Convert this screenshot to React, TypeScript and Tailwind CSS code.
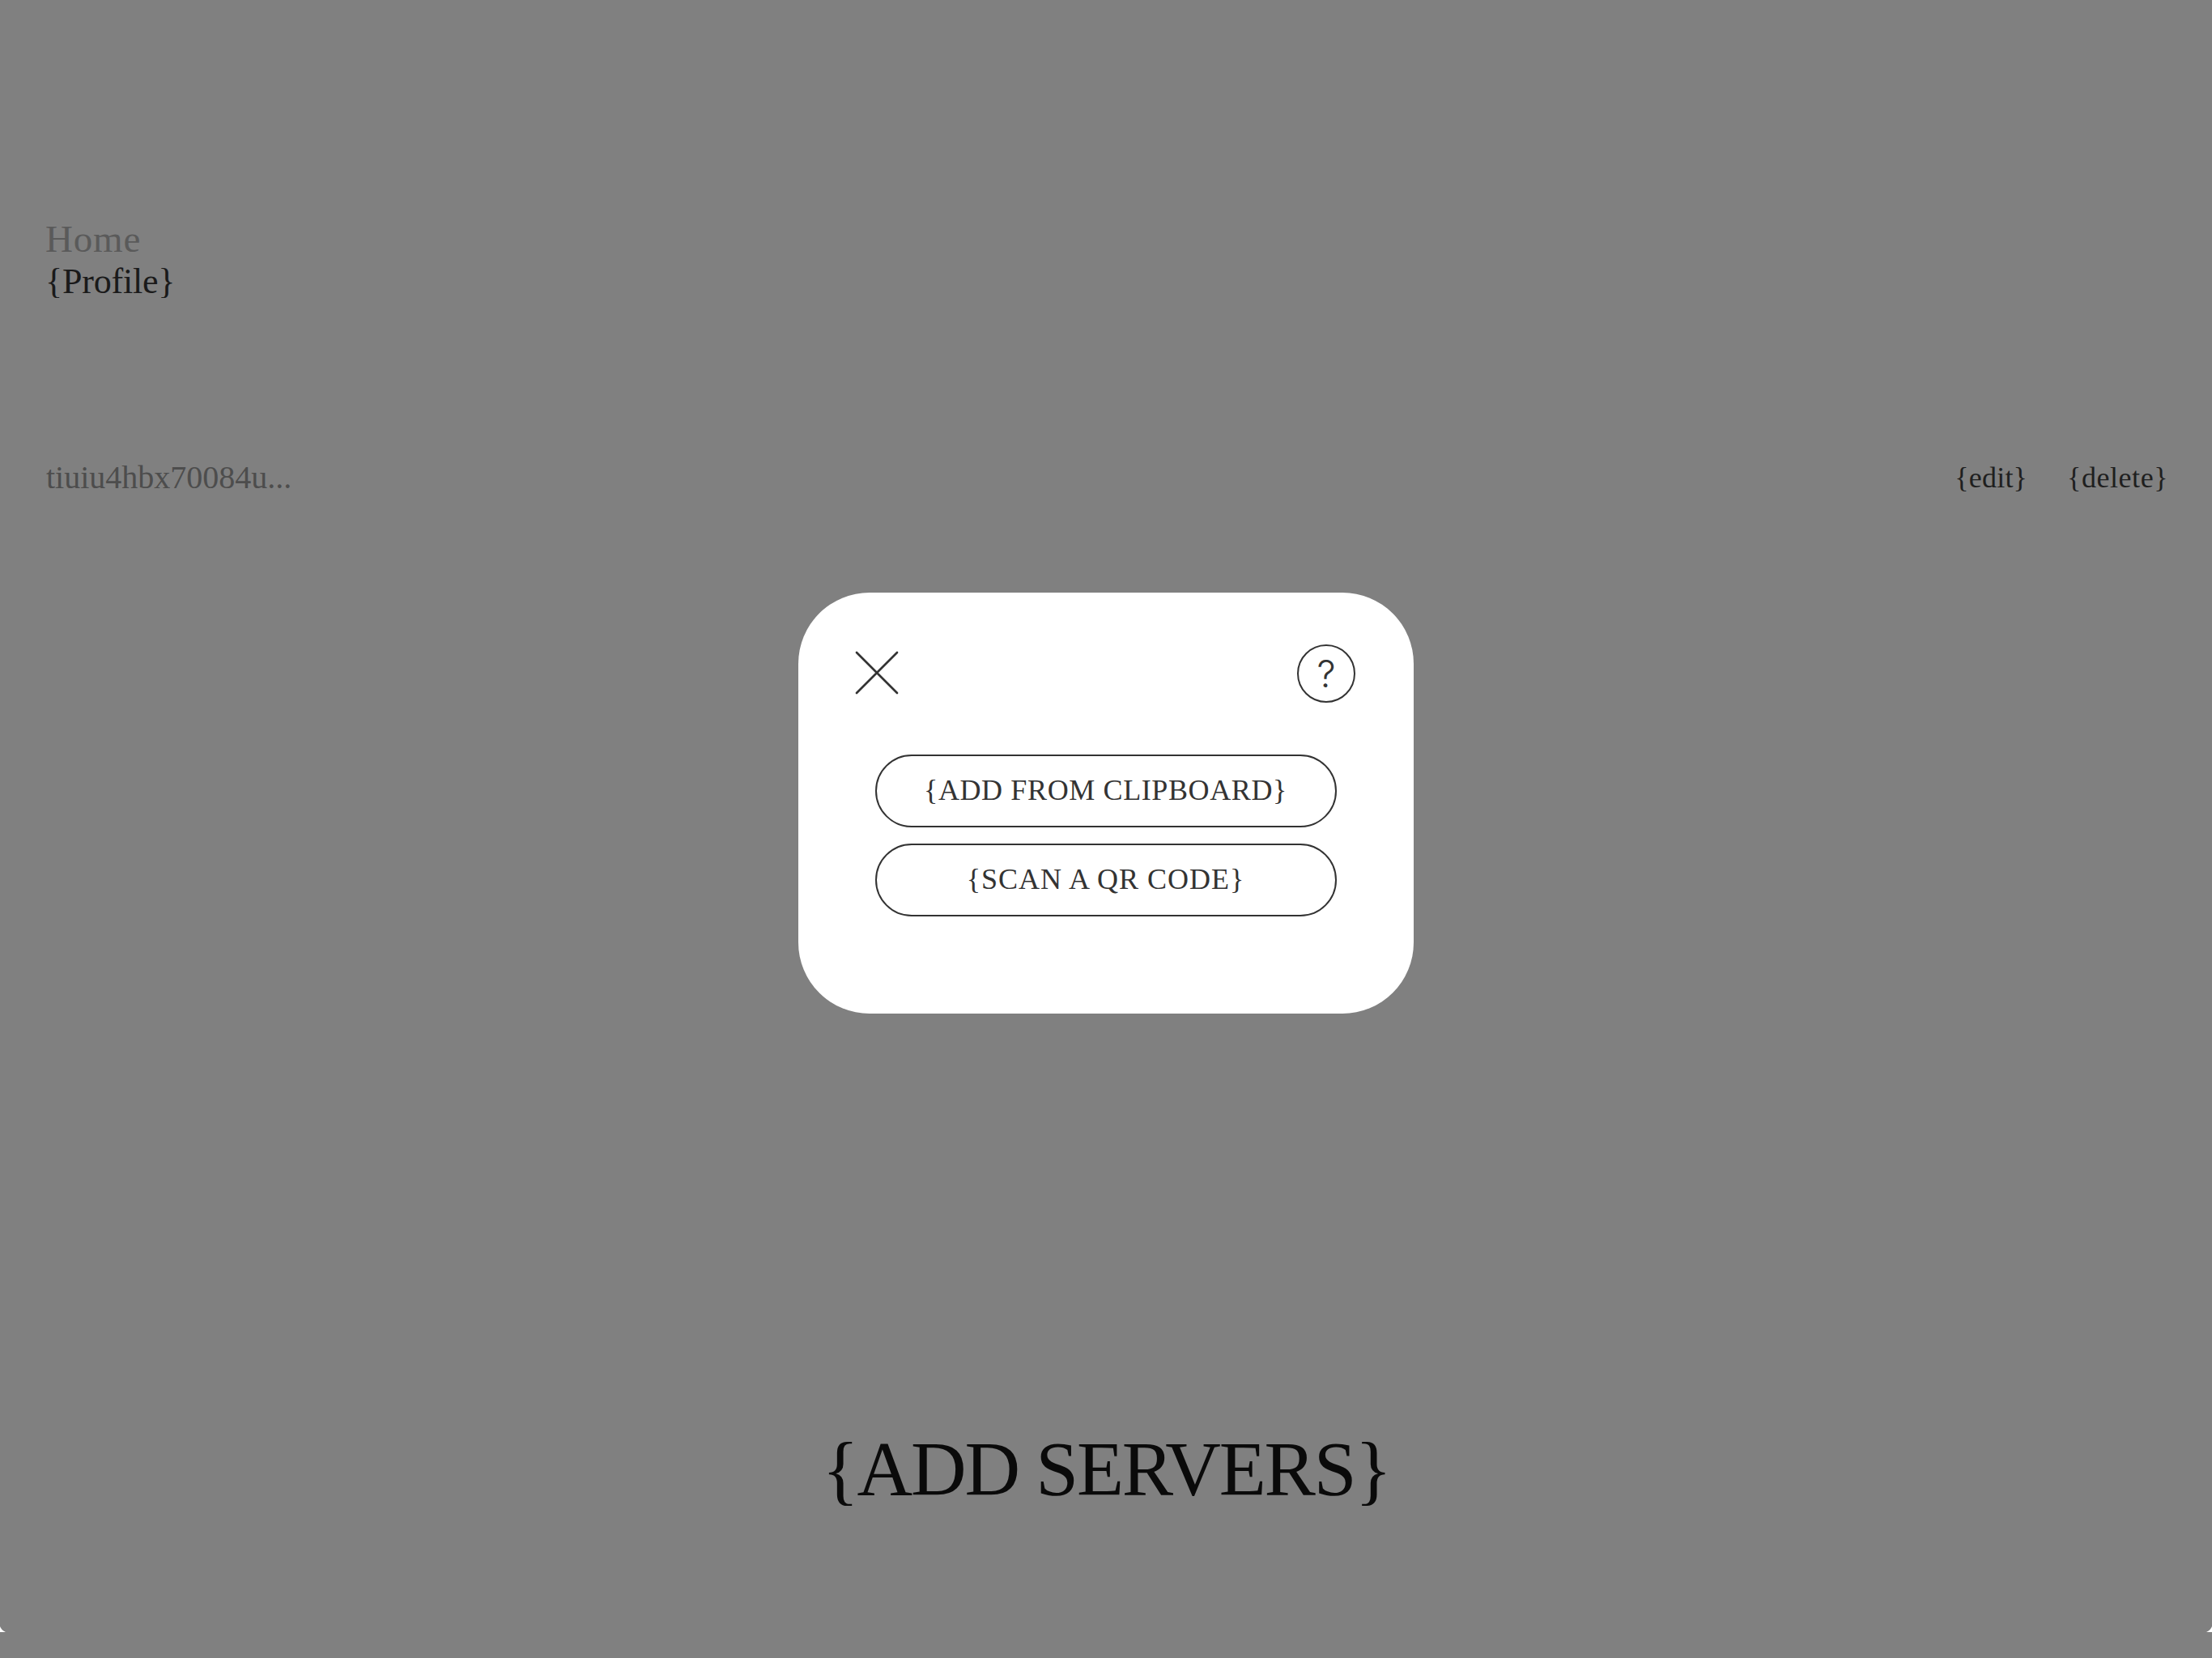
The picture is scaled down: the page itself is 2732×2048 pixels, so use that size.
export default function App() {
  const serif = "font-['Liberation_Serif',serif]";
  return (
    <div className={`relative flex h-[2048px] w-full flex-col overflow-hidden bg-[#808080] ${serif}`}>
      <nav className="flex flex-col items-start pl-[56px] pt-[269px]">
        <a className="text-[47px] leading-[52px] tracking-[0.8px] text-[#5a5a5a]">Home</a>
        <a className="pt-[1px] text-[44px] leading-[52px] tracking-[-0.2px] text-[#1a1a1a]">{"{Profile}"}</a>
      </nav>

      <div className="mt-[192px] flex items-center justify-between pl-[57px] pr-[54px]">
        <span className="text-[40px] leading-[48px] tracking-[0px] text-[#4d4d4d]">tiuiu4hbx70084u...</span>
        <div className="flex items-center gap-[49px] text-[36px] leading-[48px] text-[#1f1f1f]">
          <button className="tracking-[0.2px]">{"{edit}"}</button>
          <button className="tracking-[0.55px]">{"{delete}"}</button>
        </div>
      </div>

      <div className="mt-auto flex justify-center pb-[178px]">
        <button className="text-[95px] leading-[110px] tracking-[-2.2px] text-[#0a0a0a]">{"{ADD SERVERS}"}</button>
      </div>

      {/* modal */}
      <div className="absolute left-[986px] top-[732px] flex h-[520px] w-[760px] flex-col rounded-[88px] bg-white pt-[64px]">
        <div className="flex items-center justify-between pl-[70px] pr-[72px]">
          <svg className="mb-[3px]" width="54" height="54" viewBox="0 0 54 54" fill="none" stroke="#333333" strokeWidth="2.7" strokeLinecap="round">
            <path d="M2 2 L52 52 M52 2 L2 52" />
          </svg>
          <div className="flex h-[72px] w-[72px] items-center justify-center rounded-full border-2 border-[#333333] font-['Inter',sans-serif] text-[46px] font-light leading-none text-[#333333]">
            ?
          </div>
        </div>
        <div className="mt-[64px] flex flex-col items-center gap-[20px] pr-[1px]">
          <button className="flex h-[90px] w-[570px] items-center justify-center rounded-full border-2 border-[#333333] pb-[2px] text-[36px] leading-none tracking-[0.62px] text-[#333333]">
            {"{ADD FROM CLIPBOARD}"}
          </button>
          <button className="flex h-[90px] w-[570px] items-center justify-center rounded-full border-2 border-[#333333] pb-[2px] text-[36px] leading-none tracking-[1px] text-[#333333]">
            {"{SCAN A QR CODE}"}
          </button>
        </div>
      </div>

      {/* tiny white corner slivers */}
      <svg className="absolute left-0 top-[2009px]" width="8" height="8" viewBox="0 0 8 8" fill="#ffffff">
        <path d="M0 0 Q2 5 7 7 L0 7 Z" />
      </svg>
      <svg className="absolute right-0 top-[2009px]" width="8" height="8" viewBox="0 0 8 8" fill="#ffffff">
        <path d="M8 0 Q6 5 1 7 L8 7 Z" />
      </svg>
    </div>
  );
}
